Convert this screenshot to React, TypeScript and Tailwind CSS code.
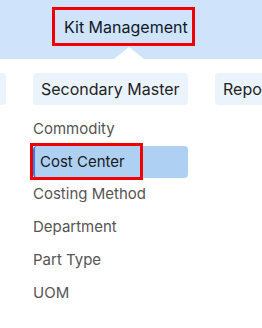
import React from 'react';

const items = ['Commodity', 'Cost Center', 'Costing Method', 'Department', 'Part Type', 'UOM'];

export default function App() {
  const selected = 'Cost Center';

  return (
    <div className="w-[262px] h-[328px] overflow-hidden bg-white" style={{ fontFamily: 'Inter, "Noto Sans", sans-serif' }}>
      {/* top menu band */}
      <div className="relative h-[59px] bg-[#cfe3fa] pl-[52px] pt-[7px]">
        <div className="w-[143px] h-[39px] border-[3px] border-[#f00000] flex items-center pl-[9px] text-[16px] text-[#111827]">
          Kit Management
        </div>
        <div className="absolute left-[114px] bottom-0 w-0 h-0 border-l-[15px] border-r-[15px] border-b-[12px] border-l-transparent border-r-transparent border-b-white" />
      </div>

      {/* sub tabs */}
      <div className="flex gap-[27px] mt-[14px] ml-[-94px] whitespace-nowrap">
        <div className="w-[100px] h-[32px] rounded-[4px] bg-[#ebf3fd] shrink-0" />
        <div className="h-[32px] rounded-[4px] bg-[#ebf3fd] px-[8px] flex items-center text-[16px] text-[#1f1f1f] shrink-0 w-[155px]">
          Secondary Master
        </div>
        <div className="h-[32px] rounded-[4px] bg-[#ebf3fd] px-[8px] flex items-center text-[16px] text-[#1f1f1f] shrink-0">
          Reports
        </div>
      </div>

      {/* list */}
      <div className="mt-[8px] ml-[33px] w-[155px] flex flex-col">
        {items.map((item) =>
          item === selected ? (
            <div key={item} className="relative h-[32px] rounded-[4px] bg-[#aed0f3] border-l-2 border-[#2f80ed] pl-[5px] flex items-center text-[15px] text-[#1a1a1a]">
              {item}
              <div className="absolute left-[-5px] top-[-3px] w-[113px] h-[37px] border-[3px] border-[#f00000]" />
            </div>
          ) : (
            <div key={item} className="h-[33px] flex items-center text-[15px] text-[#555555]">
              {item}
            </div>
          )
        )}
      </div>
    </div>
  );
}
